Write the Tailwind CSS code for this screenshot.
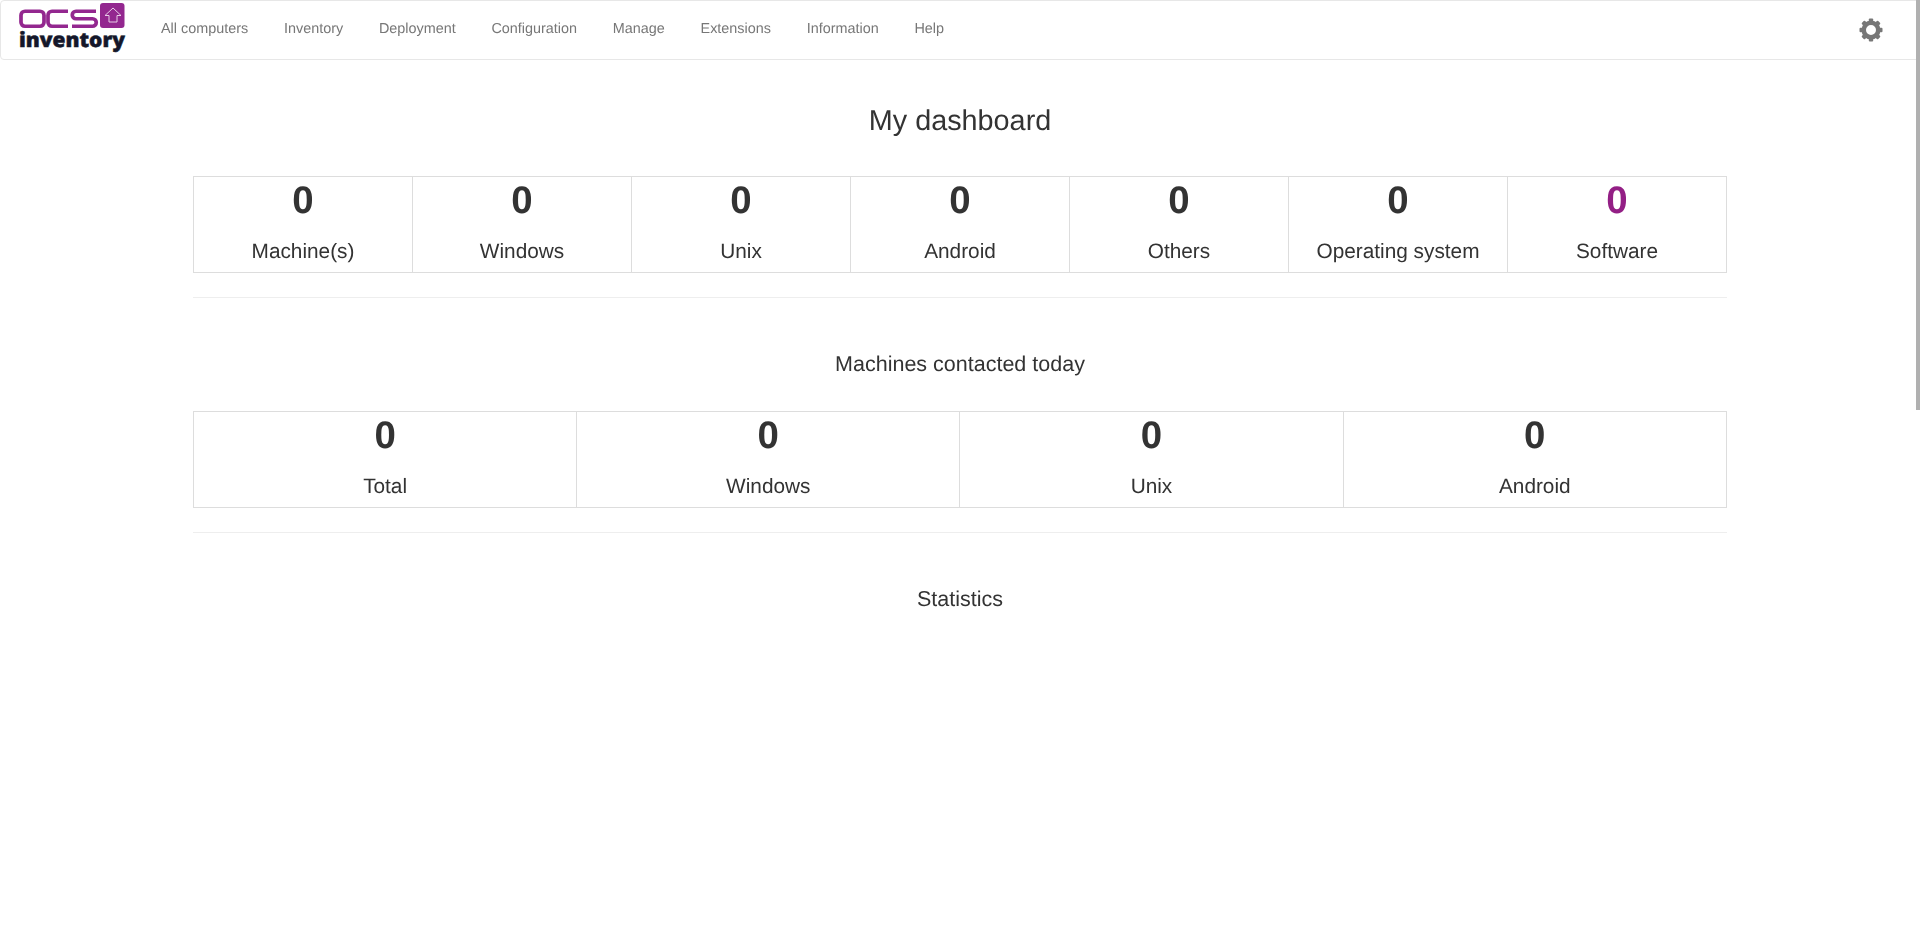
<!DOCTYPE html>
<html lang="en">
<head>
    <meta charset="UTF-8">
    <title>OCS Inventory</title>
    <script src="https://cdn.jsdelivr.net/npm/@tailwindcss/browser@4"></script>
</head>
<body class="relative h-[930px] overflow-hidden bg-white font-['Liberation_Sans',Arial,sans-serif] text-[#333] [text-rendering:geometricPrecision]">
    <!-- Navbar -->
    <nav class="flex items-center justify-between h-[60px] bg-white border border-[#e7e7e7] rounded">
        <div class="flex items-center">
            <svg class="ml-[17px] w-[110px] h-[56px]" viewBox="18 2 110 56">
                <rect x="21" y="11.250" width="23" height="15" rx="4" fill="none" stroke="#93278f" stroke-width="3.700"/>
                <path d="M68 11.250H52a4 4 0 0 0-4 4v7a4 4 0 0 0 4 4h16" fill="none" stroke="#93278f" stroke-width="3.700"/>
                <path d="M96 11.250H76a3.750 3.750 0 0 0 0 7.500h16.500a3.750 3.750 0 0 1 0 7.500H72" fill="none" stroke="#93278f" stroke-width="3.700"/>
                <rect x="100" y="3" width="24.500" height="25" rx="3" fill="#93278f"/>
                <path d="M113 8l8 7.500h-4V22h-8v-6.500h-4z" fill="none" stroke="#e6cde6" stroke-width="1"/>
                <text x="19" y="46.500" font-family="'Open Sans',sans-serif" font-weight="800" font-size="20.500" fill="#14172a" stroke="#14172a" stroke-width=".5" textLength="106" lengthAdjust="spacingAndGlyphs">inventory</text>
            </svg>
            <ul class="flex ml-[33px] -mt-[1px] text-[14.400px] text-[#777] [will-change:transform]">
                <li class="mr-[35.750px]">All computers</li>
                <li class="mr-[35.750px]">Inventory</li>
                <li class="mr-[35.750px]">Deployment</li>
                <li class="mr-[35.750px]">Configuration</li>
                <li class="mr-[35.750px]">Manage</li>
                <li class="mr-[35.750px]">Extensions</li>
                <li class="mr-[35.750px]">Information</li>
                <li>Help</li>
            </ul>
        </div>
        <svg class="mr-[36px] w-6 h-6" viewBox="0 0 24 24" fill="#777">
            <circle cx="12" cy="12" r="7.250" fill="none" stroke="#777" stroke-width="4.500"/>
            <rect x="9.800" y=".500" width="4.400" height="4.500" rx="1"/>
            <rect x="9.800" y=".500" width="4.400" height="4.500" rx="1" transform="rotate(45 12 12)"/>
            <rect x="9.800" y=".500" width="4.400" height="4.500" rx="1" transform="rotate(90 12 12)"/>
            <rect x="9.800" y=".500" width="4.400" height="4.500" rx="1" transform="rotate(135 12 12)"/>
            <rect x="9.800" y=".500" width="4.400" height="4.500" rx="1" transform="rotate(180 12 12)"/>
            <rect x="9.800" y=".500" width="4.400" height="4.500" rx="1" transform="rotate(225 12 12)"/>
            <rect x="9.800" y=".500" width="4.400" height="4.500" rx="1" transform="rotate(270 12 12)"/>
            <rect x="9.800" y=".500" width="4.400" height="4.500" rx="1" transform="rotate(315 12 12)"/>
        </svg>
    </nav>

    <main class="mx-[193px] [will-change:transform]">
        <h3 class="pt-[45px] mb-[38px] text-center text-[28.800px] leading-[33px]">My dashboard</h3>
        <div class="grid grid-cols-[repeat(6,219px)_1fr] border border-[#ddd] h-[97px] text-center">
            <div class="border-r border-[#ddd] pt-1"><div class="text-[38.400px] font-bold leading-[40px]">0</div><div class="mt-[20px] text-[20.800px] leading-[22px]">Machine(s)</div></div>
            <div class="border-r border-[#ddd] pt-1"><div class="text-[38.400px] font-bold leading-[40px]">0</div><div class="mt-[20px] text-[20.800px] leading-[22px]">Windows</div></div>
            <div class="border-r border-[#ddd] pt-1"><div class="text-[38.400px] font-bold leading-[40px]">0</div><div class="mt-[20px] text-[20.800px] leading-[22px]">Unix</div></div>
            <div class="border-r border-[#ddd] pt-1"><div class="text-[38.400px] font-bold leading-[40px]">0</div><div class="mt-[20px] text-[20.800px] leading-[22px]">Android</div></div>
            <div class="border-r border-[#ddd] pt-1"><div class="text-[38.400px] font-bold leading-[40px]">0</div><div class="mt-[20px] text-[20.800px] leading-[22px]">Others</div></div>
            <div class="border-r border-[#ddd] pt-1"><div class="text-[38.400px] font-bold leading-[40px]">0</div><div class="mt-[20px] text-[20.800px] leading-[22px]">Operating system</div></div>
            <div class="pt-1"><div class="text-[38.400px] font-bold leading-[40px] text-[#931f85]">0</div><div class="mt-[20px] text-[20.800px] leading-[22px]">Software</div></div>
        </div>
        <hr class="mt-[24px] border-[#eee]">
        <h4 class="mt-[54px] mb-[35px] text-center text-[21.500px] leading-[24px]">Machines contacted today</h4>
        <div class="grid grid-cols-[repeat(3,383.200px)_1fr] border border-[#ddd] h-[97px] text-center">
            <div class="border-r border-[#ddd] pt-1"><div class="text-[38.400px] font-bold leading-[40px]">0</div><div class="mt-[20px] text-[20.800px] leading-[22px]">Total</div></div>
            <div class="border-r border-[#ddd] pt-1"><div class="text-[38.400px] font-bold leading-[40px]">0</div><div class="mt-[20px] text-[20.800px] leading-[22px]">Windows</div></div>
            <div class="border-r border-[#ddd] pt-1"><div class="text-[38.400px] font-bold leading-[40px]">0</div><div class="mt-[20px] text-[20.800px] leading-[22px]">Unix</div></div>
            <div class="pt-1"><div class="text-[38.400px] font-bold leading-[40px]">0</div><div class="mt-[20px] text-[20.800px] leading-[22px]">Android</div></div>
        </div>
        <hr class="mt-[24px] border-[#eee]">
        <h4 class="mt-[54px] text-center text-[21.500px] leading-[24px]">Statistics</h4>
    </main>

    <!-- Overlay scrollbar -->
    <div class="absolute top-0 right-0 w-[4px] h-[410px] bg-[#b0b0b0]"></div>
</body>
</html>
